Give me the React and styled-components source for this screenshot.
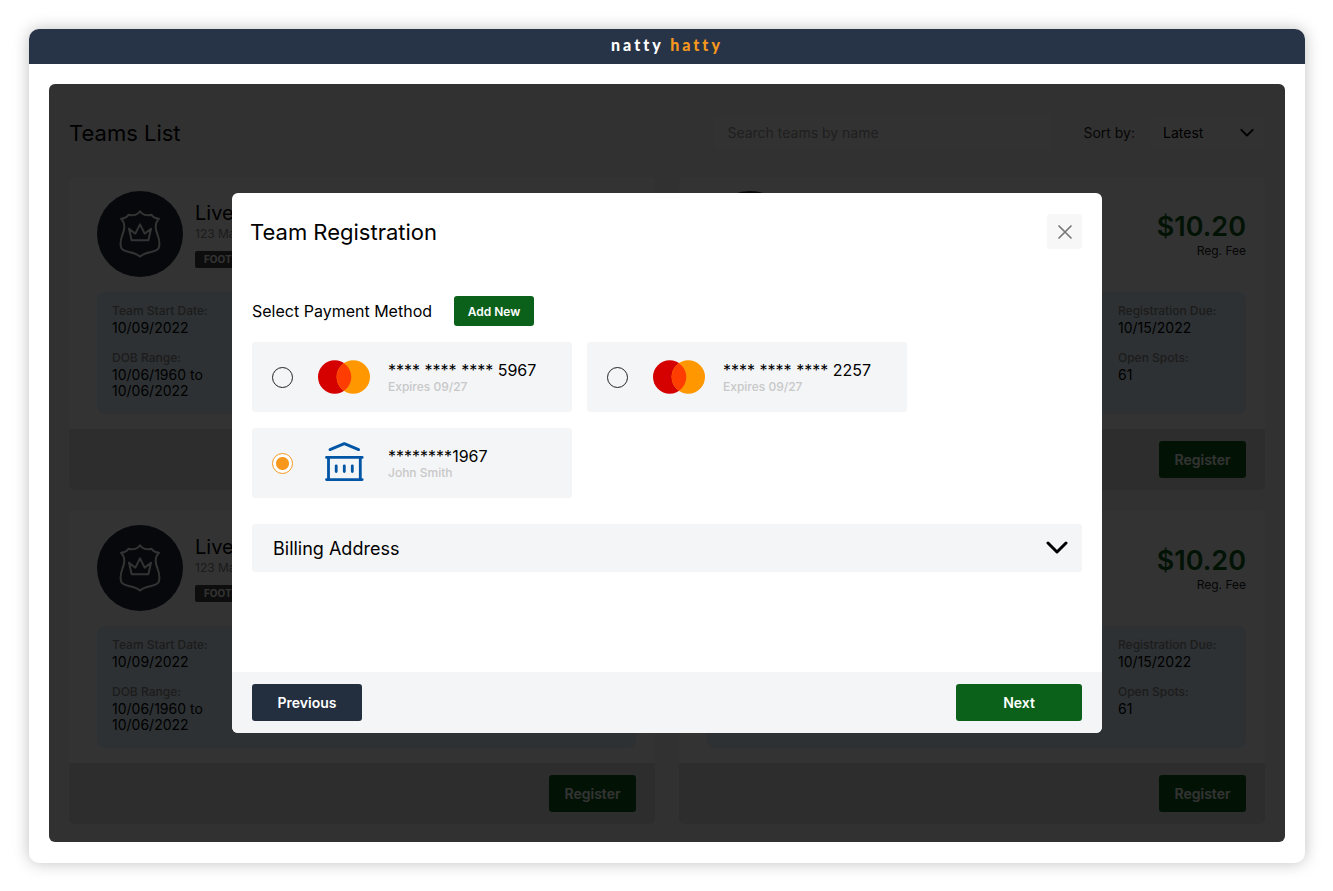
import React, { useState } from "react";
import styled, { createGlobalStyle } from "styled-components";

const GlobalStyle = createGlobalStyle`
  * {
    box-sizing: border-box;
  }

  body {
    margin: 0;
    background: #fff;
    color: #000;
    font-family: Inter, "Liberation Sans", sans-serif;
  }

  button,
  input,
  select {
    font-family: inherit;
  }
`;

const Page = styled.div`
  padding: 29px 28px 28px 29px;
`;

const Frame = styled.div`
  padding-bottom: 21px;
  background: #fff;
  border-radius: 10px;
  box-shadow: 0 0 16px rgba(0, 0, 0, 0.25);
`;

const TopBar = styled.header`
  display: flex;
  align-items: center;
  justify-content: center;
  height: 35px;
  padding-bottom: 4px;
  background: #273447;
  border-radius: 10px 10px 0 0;
`;

const Logo = styled.div`
  color: #fff;
  font-family: Lato, sans-serif;
  font-size: 16px;
  font-weight: 900;
  line-height: 20px;
  letter-spacing: 3px;

  & span {
    color: #f7981d;
  }
`;

const Panel = styled.main`
  position: relative;
  margin: 20px 20px 0;
  padding: 31px 20px 18px;
  overflow: hidden;
  background: #f6f6f6;
  border-radius: 6px;
`;

const PanelHeader = styled.div`
  display: flex;
  align-items: center;
  margin-bottom: 27px;
`;

const Title = styled.h1`
  flex: 1;
  margin: 0;
  font-size: 22px;
  font-weight: 400;
  line-height: 30px;
`;

const Search = styled.input`
  width: 338px;
  height: 35px;
  padding: 0 13px;
  background: #fafafa;
  border: 0;
  border-radius: 4px;
  font-size: 14px;

  &::placeholder {
    color: #999;
  }
`;

const SortLabel = styled.label`
  margin: 0 15px 0 31px;
  color: #222;
  font-size: 14px;
`;

const SelectBox = styled.div`
  display: grid;
  align-items: center;
  width: 115px;

  & > * {
    grid-area: 1 / 1;
  }

  & svg {
    justify-self: end;
    margin-right: 11px;
    pointer-events: none;
  }
`;

const Select = styled.select`
  width: 100%;
  height: 33px;
  padding: 0 13px;
  appearance: none;
  background: #fafafa;
  border: 0;
  border-radius: 4px;
  color: #000;
  font-size: 14px;
`;

const Cards = styled.div`
  display: grid;
  grid-template-columns: 1fr 1fr;
  gap: 21px 24px;
`;

const Card = styled.article`
  overflow: hidden;
  background: #fcfcfc;
  border-radius: 5px;
`;

const CardBody = styled.div`
  padding: 14px 19px 15px 28px;
`;

const CardHead = styled.div`
  display: flex;
  align-items: center;
  margin-bottom: 15px;
`;

const Badge = styled.div`
  display: flex;
  align-items: center;
  justify-content: center;
  width: 86px;
  height: 86px;
  margin-right: 12px;
  background: #1f293d;
  border-radius: 50%;
`;

const Team = styled.div`
  display: flex;
  flex: 1;
  flex-direction: column;
  align-items: flex-start;
`;

const TeamName = styled.h2`
  margin: 0;
  font-size: 20px;
  font-weight: 400;
  line-height: 26px;
`;

const Address = styled.div`
  margin-bottom: 9px;
  color: #888;
  font-size: 12px;
  line-height: 16px;
`;

const Sport = styled.div`
  padding: 0 9px;
  background: #444;
  border-radius: 2px;
  color: #fff;
  font-size: 10px;
  font-weight: 700;
  line-height: 17px;
`;

const Fee = styled.div`
  padding-top: 2px;
  color: #222;
  font-size: 12px;
  line-height: 16px;
  text-align: right;
`;

const Price = styled.div`
  color: #0b611a;
  font-size: 27px;
  font-weight: 600;
  line-height: 32px;
`;

const Info = styled.dl`
  display: grid;
  grid-template-columns: 113px 113px;
  justify-content: space-between;
  row-gap: 13px;
  margin: 0;
  padding: 10px 15px 15px;
  background: #e1f3ff;
  border-radius: 8px;

  & dt {
    color: #8c8c8c;
    font-size: 12px;
    font-weight: 500;
    line-height: 18px;
  }

  & dd {
    margin: 0;
    font-size: 14px;
    line-height: 16px;
  }
`;

const CardFooter = styled.div`
  display: flex;
  justify-content: flex-end;
  padding: 12px 19px;
  background: #e0e0e0;
`;

const Button = styled.button`
  width: ${({ $width }) => $width};
  height: ${({ $small }) => ($small ? "30px" : "37px")};
  padding: 0;
  background: ${({ $dark }) => ($dark ? "#232f3f" : "#0b611a")};
  border: 0;
  border-radius: 3px;
  color: #fff;
  font-size: ${({ $small }) => ($small ? "12px" : "14px")};
  font-weight: 600;
`;

const Overlay = styled.div`
  position: absolute;
  inset: 0;
  display: flex;
  align-items: center;
  justify-content: center;
  background: rgba(0, 0, 0, 0.8);
`;

const Modal = styled.section`
  display: flex;
  flex-direction: column;
  width: 870px;
  max-width: 100%;
  min-height: 540px;
  overflow: hidden;
  background: #fff;
  border-radius: 6px;
`;

const ModalHeader = styled.div`
  display: flex;
  align-items: center;
  justify-content: space-between;
  padding: 21px 20px 0 18px;
`;

const Close = styled.button`
  display: flex;
  align-items: center;
  justify-content: center;
  width: 35px;
  height: 35px;
  padding: 0;
  background: #f7f7f7;
  border: 0;
  border-radius: 3px;
`;

const ModalBody = styled.div`
  flex: 1;
  padding: 47px 20px 20px;
`;

const MethodHeader = styled.div`
  display: flex;
  align-items: center;
  gap: 22px;
  margin-bottom: 16px;
`;

const MethodTitle = styled.h3`
  margin: 0;
  font-size: 16px;
  font-weight: 400;
`;

const Methods = styled.div`
  display: grid;
  grid-template-columns: repeat(auto-fill, 320px);
  gap: 16px 15px;
  margin-bottom: 26px;
`;

const Method = styled.label`
  display: flex;
  align-items: center;
  height: 70px;
  padding: 0 20px;
  background: #f4f5f7;
  border-radius: 3px;
`;

const Radio = styled.input`
  width: 21px;
  height: 21px;
  margin: 0 25px 0 0;
  appearance: none;
  border: 1px solid #222;
  border-radius: 50%;

  &:checked {
    border-color: #f7981d;
    background: radial-gradient(circle, #f7981d 6px, #fff 7px);
  }
`;

const MethodIcon = styled.div`
  display: flex;
  justify-content: center;
  width: 52px;
  margin-right: 18px;
`;

const Number = styled.div`
  font-size: 16px;
  line-height: 20px;
`;

const Detail = styled.div`
  color: #c8c8c8;
  font-size: 12px;
  font-weight: 500;
  line-height: 14px;
`;

const Accordion = styled.button`
  display: flex;
  align-items: center;
  justify-content: space-between;
  width: 100%;
  height: 48px;
  padding: 0 14px 0 21px;
  background: #f4f5f7;
  border: 0;
  border-radius: 3px;
  color: #000;
  font-size: 18px;
`;

const ModalFooter = styled.div`
  display: flex;
  justify-content: space-between;
  padding: 12px 20px;
  background: #f4f5f7;
`;

const Shield = () => (
  <svg width="42" height="48" viewBox="0 0 126 144" fill="none" stroke="#fff" strokeWidth="6" strokeLinejoin="round">
    <path d="M63 4C57 14 43 18 29 14C24 21 17 26 6 26C18 38 19 54 10 75C4 91 3 103 7 114C17 131 45 122 63 140C81 122 109 131 119 114C123 103 122 91 116 75C107 54 108 38 120 26C109 26 102 21 97 14C83 18 69 14 63 4Z" />
    <path d="M30 56L38 91H88L96 56L77 71L63 43L49 71Z" />
  </svg>
);

const Chevron = ({ size, stroke }) => (
  <svg width={size} height={size} viewBox="0 0 22 22" fill="none" stroke="#000" strokeWidth={stroke} strokeLinecap="round" strokeLinejoin="round">
    <path d="M2 6L11 15L20 6" />
  </svg>
);

const CloseIcon = () => (
  <svg width="16" height="16" viewBox="0 0 16 16" fill="none" stroke="#777" strokeWidth="1.7" strokeLinecap="round">
    <path d="M2 2L14 14M14 2L2 14" />
  </svg>
);

const Mastercard = () => (
  <svg width="52" height="34" viewBox="0 0 52 34">
    <circle cx="16.7" cy="17" r="16.7" fill="#d50000" />
    <circle cx="35.3" cy="17" r="16.7" fill="#ff9800" />
    <path d="M26 3.2A16.7 16.7 0 0 1 26 30.8A16.7 16.7 0 0 1 26 3.2Z" fill="#ff3d00" />
  </svg>
);

const Bank = () => (
  <svg width="39" height="42" viewBox="0 1 39 42" fill="none" stroke="#0055a5" strokeWidth="2.8" strokeLinecap="round">
    <path d="M5 8.6L19.3 2.6L33.6 8.6" strokeLinejoin="round" />
    <path d="M1.5 16.4H37.2M1.5 38.6H37.2M3.5 16.4V38.6M35.3 16.4V38.6" />
    <path d="M11.2 24.8V30.6M19.3 24.8V30.6M27.3 24.8V30.6" />
  </svg>
);

const teams = [1, 2, 3, 4];

const methods = [
  { id: "5967", icon: <Mastercard />, number: "**** **** **** 5967", detail: "Expires 09/27" },
  { id: "2257", icon: <Mastercard />, number: "**** **** **** 2257", detail: "Expires 09/27" },
  { id: "1967", icon: <Bank />, number: "********1967", detail: "John Smith" },
];

const TeamCard = () => (
  <Card>
    <CardBody>
      <CardHead>
        <Badge>
          <Shield />
        </Badge>
        <Team>
          <TeamName>Live</TeamName>
          <Address>123 Main</Address>
          <Sport>FOOTBALL</Sport>
        </Team>
        <Fee>
          <Price>$10.20</Price>
          Reg. Fee
        </Fee>
      </CardHead>
      <Info>
        <div>
          <dt>Team Start Date:</dt>
          <dd>10/09/2022</dd>
        </div>
        <div>
          <dt>Registration Due:</dt>
          <dd>10/15/2022</dd>
        </div>
        <div>
          <dt>DOB Range:</dt>
          <dd>10/06/1960 to 10/06/2022</dd>
        </div>
        <div>
          <dt>Open Spots:</dt>
          <dd>61</dd>
        </div>
      </Info>
    </CardBody>
    <CardFooter>
      <Button $width="87px">Register</Button>
    </CardFooter>
  </Card>
);

const Registration = () => {
  const [selected, setSelected] = useState("1967");

  return (
    <Overlay>
      <Modal role="dialog" aria-labelledby="registration-title">
        <ModalHeader>
          <Title as="h2" id="registration-title">
            Team Registration
          </Title>
          <Close aria-label="Close">
            <CloseIcon />
          </Close>
        </ModalHeader>
        <ModalBody>
          <MethodHeader>
            <MethodTitle>Select Payment Method</MethodTitle>
            <Button $small $width="80px">
              Add New
            </Button>
          </MethodHeader>
          <Methods>
            {methods.map((method) => (
              <Method key={method.id}>
                <Radio
                  type="radio"
                  name="method"
                  value={method.id}
                  checked={selected === method.id}
                  onChange={() => setSelected(method.id)}
                />
                <MethodIcon>{method.icon}</MethodIcon>
                <div>
                  <Number>{method.number}</Number>
                  <Detail>{method.detail}</Detail>
                </div>
              </Method>
            ))}
          </Methods>
          <Accordion aria-expanded="false">
            Billing Address
            <Chevron size={22} stroke={3} />
          </Accordion>
        </ModalBody>
        <ModalFooter>
          <Button $dark $width="110px">
            Previous
          </Button>
          <Button $width="126px">Next</Button>
        </ModalFooter>
      </Modal>
    </Overlay>
  );
};

export default function App() {
  return (
    <Page>
      <GlobalStyle />
      <Frame>
        <TopBar>
          <Logo>
            natty <span>hatty</span>
          </Logo>
        </TopBar>
        <Panel>
          <PanelHeader>
            <Title>Teams List</Title>
            <Search type="search" aria-label="Search teams" placeholder="Search teams by name" />
            <SortLabel htmlFor="sort">Sort by:</SortLabel>
            <SelectBox>
              <Select id="sort">
                <option>Latest</option>
              </Select>
              <Chevron size={14} stroke={3} />
            </SelectBox>
          </PanelHeader>
          <Cards>
            {teams.map((team) => (
              <TeamCard key={team} />
            ))}
          </Cards>
          <Registration />
        </Panel>
      </Frame>
    </Page>
  );
}
